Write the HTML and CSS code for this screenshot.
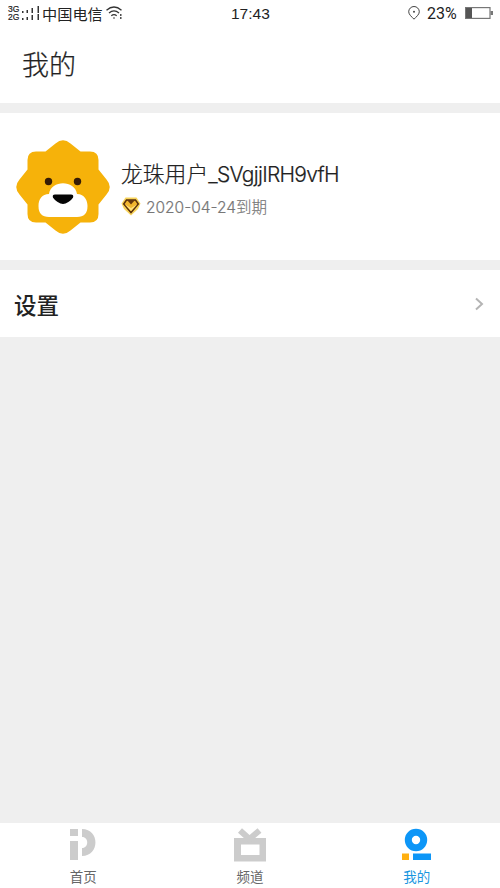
FILE: index.html
```html
<!DOCTYPE html>
<html lang="zh-CN">
<head>
<meta charset="utf-8">
<title>我的</title>
<link rel="stylesheet" href="styles.css">
</head>
<body>
<div class="app">
  <header class="status">
    <div class="network"><span>3G</span><span>2G</span></div>
    <svg class="signal" width="20" height="16" viewBox="0 0 20 16" fill="#333">
      <path d="M0 5h1.500v2H0zM4.500 4H6v3H4.500zM9.500 2H11v5H9.500zM15.500 0H17v7h-1.500zM0 12h1.500v2H0zM4.500 11H6v3H4.500zM9.500 9H11v5H9.500zM15.500 8H17v6h-1.500z"/>
    </svg>
    <span class="carrier">中国电信</span>
    <svg class="wifi" width="18" height="14" viewBox="0 0 18 14" fill="none" stroke="#333" stroke-width="1.3">
      <path d="M.5 4.200Q8-2.200 15.500 4.200M3 7Q8 2.700 13 7M5.300 9.700Q8 7.500 10.700 9.700"/>
      <circle cx="8" cy="12" r=".8" fill="#333" stroke="none"/><path d="M14.800 8v2M14.800 11v2"/>
    </svg>
    <span class="clock">17:43</span>
    <svg class="pin" width="12" height="14" viewBox="0 0 12 14" fill="none" stroke="#444">
      <path d="M6 13.200C4 11 .7 8.600.7 5.800a5.300 5.300 0 0 1 10.600 0C11.300 8.600 8 11 6 13.200Z"/><circle cx="6" cy="5.800" r="1" fill="#444" stroke="none"/>
    </svg>
    <span class="percent">23%</span>
    <svg class="battery" width="28" height="12" viewBox="0 0 28 12">
      <rect x=".6" y=".6" width="24.400" height="10.800" fill="none" stroke="#777" stroke-width="1.200"/>
      <path d="M1 1h6v10H1z" fill="#555"/><path d="M25.500 4H28v4h-2.500z" fill="#777"/>
    </svg>
  </header>
  <h1 class="title">我的</h1>
  <section class="profile">
    <svg class="avatar" width="94" height="94" viewBox="0 0 94 94">
      <path d="M39.500 3.500Q47-3 54.500 3.500L64.500 11.500H74Q82.500 11.500 82.500 20V29.500L90.500 39.500Q97 47 90.500 54.500L82.500 64.500V74Q82.500 82.500 74 82.500H64.500L54.500 90.500Q47 97 39.500 90.500L29.500 82.500H20Q11.500 82.500 11.500 74V64.500L3.500 54.500Q-3 47 3.500 39.500L11.500 29.500V20Q11.500 11.500 20 11.500H29.500Z" fill="#f6b20a"/>
      <path d="M33 54C35 39.500 59 39.500 61 54C69 54 71.500 61 71.500 66Q71.500 77 61 77H33Q22.500 77 22.500 66C22.500 59 26 54 33 54Z" fill="#fff"/>
      <g fill="#351b05"><circle cx="32.500" cy="41.500" r="3.700"/><circle cx="61.500" cy="41.500" r="3.700"/></g>
      <path d="M39 54.500H55Q58 54.500 57 57.500C55 61 50 64 47 64S39 61 37 57.500Q36 54.500 39 54.500Z" fill="#050505"/>
    </svg>
    <div class="details">
      <div class="name">龙珠用户<span class="account">_SVgjjIRH9vfH</span></div>
      <div class="member">
        <svg width="20" height="19" viewBox="0 0 20 19">
          <path d="M4.500.500H15.500L19.500 6.500 17 12 10 18.500 3 12 .500 6.500Z" fill="#f8d45b"/>
          <path d="M5.500 3H14.500L17.300 7 10 15.500 2.700 7Z" fill="#f2b62e" stroke="#59300c" stroke-width="1.500"/>
          <path d="M6 3H14L10 7.500Z" fill="#66390e"/><path d="M4 7.500 10 14 16 7.500 10 11Z" fill="#ffe27b"/>
        </svg>
        <span class="expiry"><span class="date">2020-04-24</span>到期</span>
      </div>
    </div>
  </section>
  <section class="settings">
    <span>设置</span>
    <svg width="9" height="14" viewBox="0 0 9 14" fill="none" stroke="#b4b4b4" stroke-width="2"><path d="M1 1.500 7 7 1 12.500"/></svg>
  </section>
  <main class="blank"></main>
  <nav class="tabs">
    <div class="tab">
      <svg width="34" height="34" viewBox="0 0 34 34" fill="#ccc"><path d="M4 1h8v7H4zM4 13h8v19H4zM16 1C34 1 34 28 16 28V20C23 20 23 9 16 9Z"/></svg>
      <span>首页</span>
    </div>
    <div class="tab">
      <svg width="34" height="34" viewBox="0 0 34 34"><path d="M1 10H33V33.500H1Z" fill="#ccc"/><path d="M7 2.500 16.500 11 26.500 2.500" fill="none" stroke="#ccc" stroke-width="6"/><path d="M8 16.500H26.500V27H8Z" fill="#fff"/></svg>
      <span>频道</span>
    </div>
    <div class="tab active">
      <svg width="34" height="34" viewBox="0 0 34 34"><circle cx="16" cy="12" r="7.700" fill="none" stroke="#0d96f7" stroke-width="7"/><path d="M2 25.500H9V32H2Z" fill="#ffb011"/><path d="M13 25.500H31V32H13Z" fill="#0d96f7"/></svg>
      <span>我的</span>
    </div>
  </nav>
</div>
</body>
</html>
```
FILE: styles.css
```css
* { box-sizing: border-box; }
body { margin: 0; background: #efefef; color: #222; font-family: "Noto Sans CJK SC", sans-serif; }
.app { display: flex; flex-direction: column; width: 500px; height: 888px; }
.status { display: flex; align-items: center; height: 28px; padding: 0 7px 2px; background: #fff; color: #222; }
.network { display: flex; flex-direction: column; width: 13px; padding-left: 1px; font: 8.500px/8px "Liberation Sans", sans-serif; -webkit-text-stroke: .2px #222; }
.signal { margin: 1px 0 0 2px; }
.carrier { width: 62px; font-size: 15.200px; line-height: 20px; white-space: nowrap; }
.wifi { margin-left: 2px; }
.clock { margin-left: 107px; width: 42px; font: 15.500px/20px "Liberation Sans", sans-serif; padding-top: 1px; }
.pin { margin-left: 135px; }
.percent { margin-left: 7px; width: 31px; padding-top: 1px; font: 16px/20px Roboto, sans-serif; }
.battery { margin-left: 7px; }
.status svg, .status span { flex-shrink: 0; }
.title { height: 75px; margin: 0; padding: 16px 22px; background: #fff; font-size: 27px; line-height: 40px; font-weight: 300; -webkit-text-stroke: .25px #222; }
.profile { display: flex; align-items: center; height: 147px; margin: 10px 0; padding-left: 16px; background: #fff; }
.details { margin: 2px 0 0 11px; }
.name { height: 38px; font-size: 21.800px; line-height: 36px; font-weight: 300; white-space: nowrap; -webkit-text-stroke: .2px #222; }
.account { font-family: Inter, sans-serif; font-size: 21px; letter-spacing: -.72px; }
.member { display: flex; align-items: center; height: 28px; gap: 5px; }
.expiry { color: #777; font-size: 15.500px; line-height: 24px; font-weight: 300; -webkit-text-stroke: .2px #777; }
.date { font-family: Inter, sans-serif; font-size: 15.500px; }
.settings { display: flex; align-items: center; justify-content: space-between; height: 67px; padding: 0 16px 0 14px; background: #fff; font-size: 22.500px; font-weight: 500; }
.blank { flex: 1; }
.tabs { display: flex; height: 65px; background: #fff; }
.tab { flex: 1; display: flex; flex-direction: column; align-items: center; padding-top: 5px; color: #666; font-size: 13.500px; line-height: 20px; }
.tab span { margin-top: 4px; }
.active { color: #1896df; }
```
